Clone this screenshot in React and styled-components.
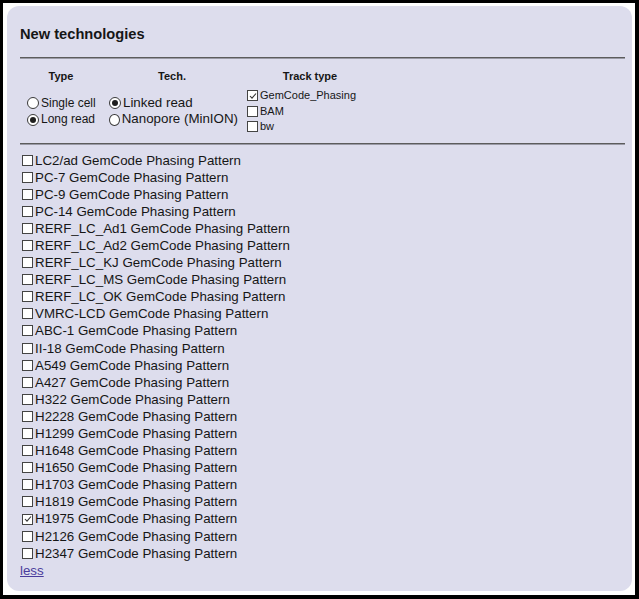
import styled, { createGlobalStyle } from "styled-components";

const lines = [
  "LC2/ad",
  "PC-7",
  "PC-9",
  "PC-14",
  "RERF_LC_Ad1",
  "RERF_LC_Ad2",
  "RERF_LC_KJ",
  "RERF_LC_MS",
  "RERF_LC_OK",
  "VMRC-LCD",
  "ABC-1",
  "II-18",
  "A549",
  "A427",
  "H322",
  "H2228",
  "H1299",
  "H1648",
  "H1650",
  "H1703",
  "H1819",
  "H1975",
  "H2126",
  "H2347",
];

function Check({ checked }) {
  return (
    <Box>
      {checked && (
        <svg width="8" height="8" viewBox="0 0 8 8">
          <polyline
            points="1,4 3,6.2 7,1.5"
            fill="none"
            stroke="#333"
            strokeWidth="1.1"
          />
        </svg>
      )}
    </Box>
  );
}

export default function App() {
  return (
    <>
      <Global />
      <Frame>
        <Panel>
          <Title>New technologies</Title>
          <Rule />

          <Filters>
            <Head>Type</Head>
            <Head>Tech.</Head>
            <Head>Track type</Head>

            <Cell>
              <Option size={12} lh={16.6}>
                <Radio /> Single cell
              </Option>
              <Option size={12} lh={16.6}>
                <Radio checked /> Long read
              </Option>
            </Cell>
            <Cell>
              <Option size={13.33} lh={16.6}>
                <Radio checked /> Linked read
              </Option>
              <Option size={13.33} lh={16.6}>
                <Radio /> Nanopore (MinION)
              </Option>
            </Cell>
            <Cell $pad={1}>
              <Option size={11} lh={15.5}>
                <Check checked />
                GemCode_Phasing
              </Option>
              <Option size={11} lh={15.5}>
                <Check />
                BAM
              </Option>
              <Option size={11} lh={15.5}>
                <Check />
                bw
              </Option>
            </Cell>
          </Filters>

          <Rule $gap={8} />

          <List>
            {lines.map((name) => (
              <Item key={name}>
                <Check checked={name === "H1975"} />
                {name} GemCode Phasing Pattern
              </Item>
            ))}
          </List>
          <Less href="#">less</Less>
        </Panel>
      </Frame>
    </>
  );
}

const Global = createGlobalStyle`
  body {
    margin: 0;
    font-family: "Liberation Sans", Arial, sans-serif;
    color: #161616;
  }
`;

const Frame = styled.div`
  box-sizing: border-box;
  width: 639px;
  height: 599px;
  background: #fff;
  border: solid #000;
  border-width: 3px 4px 4px 3px;
  padding: 3px 3px 4px 4px;
`;

const Panel = styled.div`
  box-sizing: border-box;
  height: 100%;
  background: #dddded;
  border-radius: 12px;
  padding: 20px 7px 0 13px;
`;

const Title = styled.h1`
  margin: 0;
  font-size: 14.67px;
  line-height: 17px;
  font-weight: bold;
`;

const Rule = styled.div`
  margin-top: ${(p) => (p.$gap ? p.$gap : 14)}px;
  height: 0;
  border-top: 1px solid #5c5c5c;
  border-bottom: 1px solid #9a9aa6;
`;

const Filters = styled.div`
  display: grid;
  grid-template-columns: 74px 132px 128px;
  column-gap: 8px;
  row-gap: 5px;
  align-items: center;
  margin: 11px 0 0 4px;
`;

const Head = styled.div`
  font-size: 11px;
  font-weight: bold;
  line-height: 13px;
  text-align: center;
`;

const Cell = styled.div`
  padding-left: ${(p) => (p.$pad !== undefined ? p.$pad : 3)}px;
`;

const Option = styled.div`
  display: flex;
  align-items: center;
  font-size: ${(p) => p.size}px;
  line-height: ${(p) => p.lh}px;
  white-space: nowrap;
`;

const Radio = styled.span`
  box-sizing: border-box;
  width: 12px;
  height: 12px;
  margin-right: 2px;
  border-radius: 50%;
  border: 1px solid #3a3a3a;
  background: #fff;
  display: inline-flex;
  align-items: center;
  justify-content: center;

  &::after {
    content: "";
    width: 6px;
    height: 6px;
    border-radius: 50%;
    background: ${(p) => (p.checked ? "#1e1e1e" : "transparent")};
  }
`;

const Box = styled.span`
  box-sizing: border-box;
  width: 11px;
  height: 11px;
  margin-right: 2px;
  border: 1px solid #444;
  background: #fff;
  display: inline-flex;
  align-items: center;
  justify-content: center;
  flex-shrink: 0;
`;

const List = styled.div`
  margin-top: 7px;
  padding-left: 2px;
`;

const Item = styled.div`
  display: flex;
  align-items: center;
  font-size: 13.33px;
  line-height: 17.1px;
  white-space: nowrap;
`;

const Less = styled.a`
  display: block;
  width: fit-content;
  font-size: 13.33px;
  line-height: 17.1px;
  color: #4a3c9c;
  text-decoration: underline;
`;
